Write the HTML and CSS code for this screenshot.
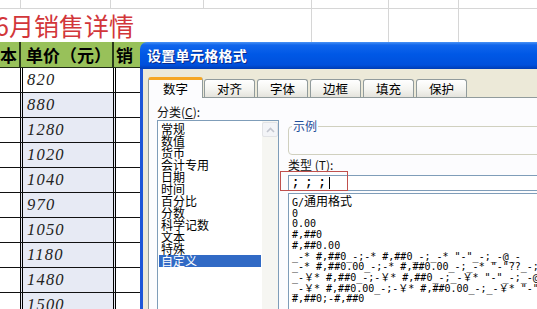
FILE: index.html
```html
<!DOCTYPE html>
<html lang="zh-CN">
<head>
    <meta charset="UTF-8">
    <title>设置单元格格式</title>
    <link rel="stylesheet" href="styles.css">
</head>
<body>

    <div class="sheet">
        <div class="row top-row">
            <div class="cell w21"></div>
            <div class="cell w90"></div>
            <div class="cell w93"></div>
            <div class="cell w108"></div>
            <div class="cell w77"></div>
            <div class="cell w70"></div>
            <div class="cell fill"></div>
        </div>
        <div class="row title-row">
            <div class="cell title-cell"><span class="title">6月销售详情</span></div>
            <div class="cell w77"></div>
            <div class="cell w70"></div>
            <div class="cell fill"></div>
        </div>
        <div class="row head-row">
            <div class="ha">本</div>
            <div class="hb">单价（元）</div>
            <div class="hc">销</div>
        </div>
        <div class="row data-row"><div class="ca"></div><div class="cb first">820</div><div class="cc"></div></div>
        <div class="row data-row"><div class="ca"></div><div class="cb">880</div><div class="cc"></div></div>
        <div class="row data-row"><div class="ca"></div><div class="cb">1280</div><div class="cc"></div></div>
        <div class="row data-row"><div class="ca"></div><div class="cb">1020</div><div class="cc"></div></div>
        <div class="row data-row"><div class="ca"></div><div class="cb">1040</div><div class="cc"></div></div>
        <div class="row data-row"><div class="ca"></div><div class="cb">970</div><div class="cc"></div></div>
        <div class="row data-row"><div class="ca"></div><div class="cb">1050</div><div class="cc"></div></div>
        <div class="row data-row"><div class="ca"></div><div class="cb">1180</div><div class="cc"></div></div>
        <div class="row data-row"><div class="ca"></div><div class="cb">1480</div><div class="cc"></div></div>
        <div class="row data-row"><div class="ca"></div><div class="cb">1500</div><div class="cc"></div></div>
    </div>

    <div class="dialog">
        <div class="titlebar">设置单元格格式</div>
        <div class="frame">
            <div class="tabs">
                <div class="tab active">数字</div>
                <div class="tab">对齐</div>
                <div class="tab">字体</div>
                <div class="tab">边框</div>
                <div class="tab">填充</div>
                <div class="tab">保护</div>
            </div>
            <div class="panel">
                <div class="left-col">
                    <div class="label">分类(<u>C</u>):</div>
                    <div class="listbox">
                        <ul class="items">
                            <li>常规</li>
                            <li>数值</li>
                            <li>货币</li>
                            <li>会计专用</li>
                            <li>日期</li>
                            <li>时间</li>
                            <li>百分比</li>
                            <li>分数</li>
                            <li>科学记数</li>
                            <li>文本</li>
                            <li>特殊</li>
                            <li class="selected">自定义</li>
                        </ul>
                        <div class="vscroll">
                            <div class="scroll-btn">
                                <svg width="9" height="6" viewBox="0 0 9 6"><path d="M1 5 L4.5 1.5 L8 5" fill="none" stroke="#c3c6cf" stroke-width="1.6"/></svg>
                            </div>
                        </div>
                    </div>
                </div>
                <div class="right-col">
                    <fieldset class="sample">
                        <legend>示例</legend>
                    </fieldset>
                    <div class="label type-label">类型 (<u>T</u>):</div>
                    <div class="type-wrap">
                        <div class="type-input"><span class="semis">;;;</span><span class="caret"></span></div>
                        <div class="mark"></div>
                    </div>
                    <ul class="fmt-list">
                        <li>G/<span class="cjk">通用格式</span></li>
                        <li>0</li>
                        <li>0.00</li>
                        <li>#,##0</li>
                        <li>#,##0.00</li>
                        <li>_-* #,##0_-;-* #,##0_-;_-* "-"_-;_-@_-</li>
                        <li>_-* #,##0.00_-;-* #,##0.00_-;_-* "-"??_-;_-@_-</li>
                        <li>_-￥* #,##0_-;-￥* #,##0_-;_-￥* "-"_-;_-@_-</li>
                        <li>_-￥* #,##0.00_-;-￥* #,##0.00_-;_-￥* "-"??_-;_-@_-</li>
                        <li>#,##0;-#,##0</li>
                    </ul>
                </div>
            </div>
        </div>
    </div>

</body>
</html>
```

FILE: styles.css
```css
body {
    margin: 0;
    width: 537px;
    height: 309px;
    overflow: hidden;
    position: relative;
    background-color: #ffffff;
    font-family: "Noto Sans CJK SC", sans-serif;
    color: #000000;
}

/* spreadsheet behind the dialog */
.row {
    display: flex;
    box-sizing: border-box;
}
.cell {
    box-sizing: border-box;
    border-right: 1px solid #d6d6d6;
}
.w21 { width: 21px; }
.w90 { width: 90px; }
.w93 { width: 93px; }
.w108 { width: 108px; }
.w77 { width: 77px; }
.w70 { width: 70px; }
.fill { flex: 1; border-right: none; }
.top-row {
    height: 9px;
    border-bottom: 1px solid #d6d6d6;
}
.title-row {
    height: 33px;
}
.title-cell {
    width: 312px;
    overflow: hidden;
    white-space: nowrap;
}
.title {
    display: block;
    margin-left: -5px;
    font-size: 25px;
    line-height: 33px;
    color: #d2363a;
}
.head-row {
    height: 26px;
    background-color: #98c15a;
    border-bottom: 1px solid #1f2a14;
    font-weight: bold;
    font-size: 17px;
    line-height: 25px;
    white-space: nowrap;
}
.ha {
    width: 21px;
    box-sizing: border-box;
    border-right: 2px solid #2a3a1a;
    text-align: right;
    padding-right: 2px;
}
.hb {
    width: 93px;
    box-sizing: border-box;
    border-right: 2px solid #2a3a1a;
    padding-left: 5px;
}
.hc {
    flex: 1;
    padding-left: 2px;
}
.data-row {
    height: 25px;
    border-bottom: 1px solid #111111;
}
.ca {
    width: 20px;
}
.cb {
    width: 96px;
    box-sizing: border-box;
    border-left: 3px double #000000;
    border-right: 3px double #000000;
    background-color: #e7eaf4;
    padding-left: 4px;
    font-family: "Liberation Serif", serif;
    font-style: italic;
    font-size: 16.5px;
    letter-spacing: 1.2px;
    line-height: 24px;
    color: #222222;
}
.cb.first {
    background-color: #ffffff;
}
.cc {
    flex: 1;
}

/* dialog */
.dialog {
    position: absolute;
    left: 140px;
    top: 42px;
    width: 420px;
    height: 290px;
}
.titlebar {
    height: 27px;
    box-sizing: border-box;
    padding-left: 7px;
    border-top-left-radius: 7px;
    background: linear-gradient(#4a93f5 0, #1166ec 3px, #0058e6 45%, #0050dc 85%, #003cb4 100%);
    color: #ffffff;
    font-weight: bold;
    font-size: 14px;
    line-height: 27px;
    text-shadow: 1px 1px #0b2a8a;
    letter-spacing: 0.3px;
}
.frame {
    height: 270px;
    border-left: 3px solid #1d56d8;
    background-color: #ece9d8;
    padding: 8px 0 0 5px;
}
.tabs {
    display: flex;
    align-items: flex-end;
    height: 20px;
    font-size: 12.5px;
}
.tab {
    position: relative;
    width: 51px;
    height: 18px;
    box-sizing: border-box;
    margin-right: 2px;
    border: 1px solid #919b9c;
    border-bottom: none;
    border-radius: 3px 3px 0 0;
    background: linear-gradient(#ffffff, #f4f4f0 55%, #e4e3dc);
    text-align: center;
    line-height: 17px;
}
.tab.active {
    width: 55px;
    height: 21px;
    margin-right: 1px;
    margin-bottom: -1px;
    border-top: 3px solid #f5a623;
    background: #fcfcfe;
    line-height: 18px;
    z-index: 1;
}
.panel {
    display: flex;
    align-items: flex-start;
    height: 240px;
    border: 1px solid #919b9c;
    background-color: #fcfcfe;
    padding: 8px 0 0 8px;
}
.label {
    font-size: 12px;
    line-height: 12px;
    height: 12px;
    color: #111111;
    white-space: nowrap;
}
.left-col {
    width: 122px;
    flex: none;
}
.listbox {
    display: flex;
    margin-top: 2px;
    height: 220px;
    border: 1px solid #7f9db9;
    background-color: #ffffff;
}
.items {
    flex: 1;
    list-style: none;
    margin: 0;
    padding: 2px 1px 0 1px;
    font-size: 12px;
    line-height: 12px;
}
.items li {
    padding-left: 2px;
    height: 12px;
}
.items li.selected {
    background-color: #316ac5;
    color: #ffffff;
}
.vscroll {
    width: 16px;
    background-color: #f6f6f2;
}
.scroll-btn {
    height: 15px;
    margin: 1px 0 0 0;
    box-sizing: border-box;
    border: 1px solid #e2e3e6;
    border-radius: 2px;
    background: #f3f4f7;
    display: flex;
    align-items: center;
    justify-content: center;
}
.right-col {
    margin-left: 9px;
    padding-top: 14px;
    width: 300px;
    flex: none;
}
.sample {
    margin: 0;
    padding: 0;
    height: 35px;
    box-sizing: border-box;
    border: 1px solid #d0d0bf;
    border-radius: 4px;
}
.sample legend {
    margin-left: 3px;
    padding: 0 1px;
    font-size: 12px;
    line-height: 12px;
    color: #1f4f9a;
}
.type-label {
    margin-top: 4px;
}
.type-wrap {
    position: relative;
    margin-top: 4px;
}
.type-input {
    height: 16px;
    box-sizing: border-box;
    border: 1px solid #7f9db9;
    background-color: #ffffff;
    padding-left: 3px;
    display: flex;
    align-items: center;
}
.semis {
    font-family: "Liberation Mono", monospace;
    font-weight: bold;
    font-size: 12px;
    letter-spacing: 6px;
    line-height: 14px;
}
.caret {
    width: 1px;
    height: 12px;
    margin-left: -3px;
    background-color: #000000;
}
.mark {
    position: absolute;
    left: -8px;
    top: -4px;
    width: 68px;
    height: 20px;
    box-sizing: border-box;
    border: 1px solid #c0504d;
}
.fmt-list {
    list-style: none;
    margin: 2px 0 0 0;
    padding: 2px 0 0 3px;
    height: 130px;
    border: 1px solid #7f9db9;
    border-right: none;
    background-color: #ffffff;
    font-family: "DejaVu Sans Mono", "Noto Sans CJK SC", monospace;
    font-size: 10px;
    line-height: 10.7px;
    white-space: nowrap;
    overflow: hidden;
}
.fmt-list .cjk {
    font-family: "Noto Sans CJK SC", sans-serif;
    font-size: 12px;
}
```
